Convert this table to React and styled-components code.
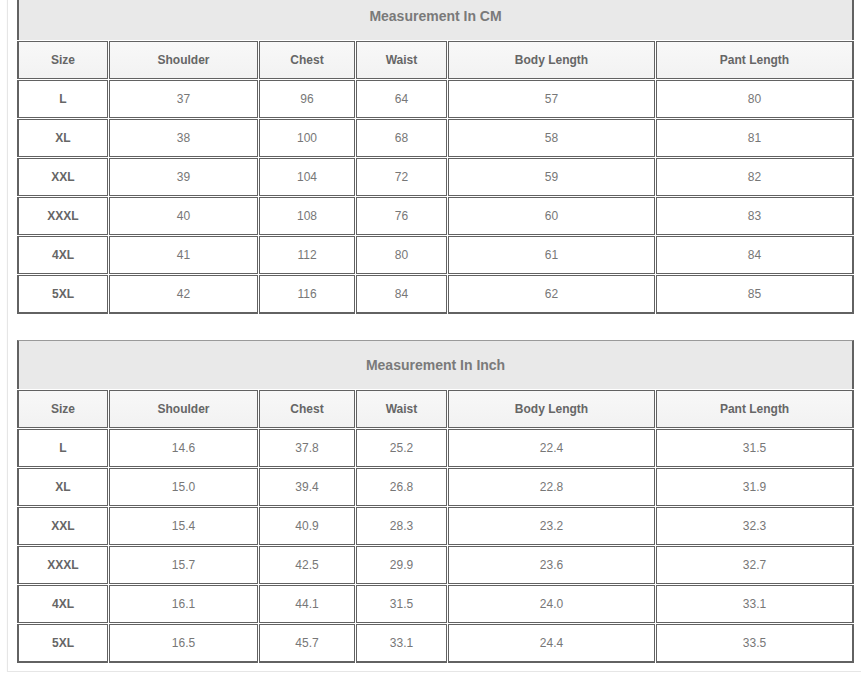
import React from "react";
import styled, { createGlobalStyle } from "styled-components";

const Global = createGlobalStyle`
  html, body { margin: 0; padding: 0; background: #ffffff; overflow: hidden; }
  body { font-family: "Liberation Sans", Arial, sans-serif; }
`;

const Panel = styled.div`
  margin: -31px 0 0 7px;
  width: 880px;
  border: 1px solid #e6e6e6;
  box-shadow: 0 0 2px rgba(0, 0, 0, 0.04);
  padding: 20px 8px 7px 8px;
  display: flex;
  flex-direction: column;
  gap: 24px;
  background: #fff;
`;

const Table = styled.table`
  border-collapse: separate;
  border-spacing: 1px;
  table-layout: fixed;
  width: 839px;
  font-size: 12px;
  color: #6f6f6f;
`;

const TitleCell = styled.th`
  height: 48px;
  padding: 0;
  background: #e9e9e9;
  border-top: 1px solid #9a9a9a;
  border-left: 2px solid #626262;
  border-right: 2px solid #626262;
  font-size: 14px;
  font-weight: bold;
  color: #7a7a7a;
  text-align: center;
  vertical-align: middle;
`;

const Row = styled.tr`
  height: ${(p) => (p.$last ? 39 : 38)}px;
`;

const Cell = styled.td`
  padding: 0;
  text-align: center;
  vertical-align: middle;
  border: 1px solid #626262;
  border-left-width: ${(p) => (p.$first ? 2 : 1)}px;
  border-right-width: ${(p) => (p.$lastCol ? 2 : 1)}px;
  border-bottom-width: ${(p) => (p.$lastRow ? 2 : 1)}px;
  background: ${(p) => (p.$head ? "linear-gradient(#f8f8f8, #f2f2f2)" : "#ffffff")};
  font-weight: ${(p) => (p.$head || p.$first ? "bold" : "normal")};
  color: ${(p) => (p.$head || p.$first ? "#666666" : "#777777")};
  white-space: nowrap;
`;

const widths = [91, 149, 96, 91, 207, 198];
const headers = ["Size", "Shoulder", "Chest", "Waist", "Body Length", "Pant Length"];

const cmRows = [
  ["L", "37", "96", "64", "57", "80"],
  ["XL", "38", "100", "68", "58", "81"],
  ["XXL", "39", "104", "72", "59", "82"],
  ["XXXL", "40", "108", "76", "60", "83"],
  ["4XL", "41", "112", "80", "61", "84"],
  ["5XL", "42", "116", "84", "62", "85"],
];

const inchRows = [
  ["L", "14.6", "37.8", "25.2", "22.4", "31.5"],
  ["XL", "15.0", "39.4", "26.8", "22.8", "31.9"],
  ["XXL", "15.4", "40.9", "28.3", "23.2", "32.3"],
  ["XXXL", "15.7", "42.5", "29.9", "23.6", "32.7"],
  ["4XL", "16.1", "44.1", "31.5", "24.0", "33.1"],
  ["5XL", "16.5", "45.7", "33.1", "24.4", "33.5"],
];

function SizeTable({ title, rows }) {
  return (
    <Table>
      <colgroup>
        {widths.map((w, i) => (
          <col key={i} style={{ width: w }} />
        ))}
      </colgroup>
      <thead>
        <tr>
          <TitleCell colSpan={6}>{title}</TitleCell>
        </tr>
        <Row>
          {headers.map((h, i) => (
            <Cell as="th" key={h} $head $first={i === 0} $lastCol={i === 5}>
              {h}
            </Cell>
          ))}
        </Row>
      </thead>
      <tbody>
        {rows.map((r, ri) => {
          const last = ri === rows.length - 1;
          return (
            <Row key={ri} $last={last}>
              {r.map((v, i) => (
                <Cell key={i} $first={i === 0} $lastCol={i === 5} $lastRow={last}>
                  {v}
                </Cell>
              ))}
            </Row>
          );
        })}
      </tbody>
    </Table>
  );
}

export default function App() {
  return (
    <>
      <Global />
      <Panel>
        <SizeTable title="Measurement In CM" rows={cmRows} />
        <SizeTable title="Measurement In Inch" rows={inchRows} />
      </Panel>
    </>
  );
}
